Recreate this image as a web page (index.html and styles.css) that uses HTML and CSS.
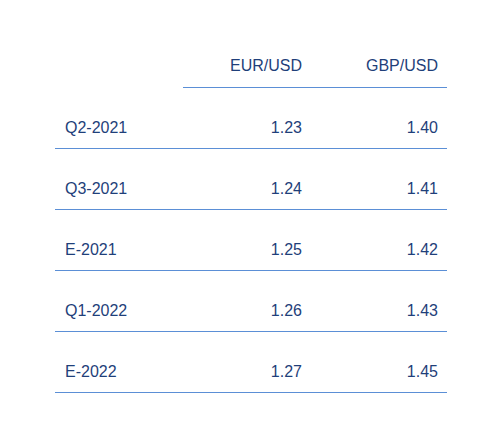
FILE: index.html
```html
<!DOCTYPE html>
<html>
<head>
<meta charset="utf-8">
<link rel="stylesheet" href="styles.css">
</head>
<body>
<div class="wrap">
<table class="rates">
  <colgroup>
    <col class="c1">
    <col class="c2">
    <col class="c3">
  </colgroup>
  <thead>
    <tr>
      <th class="blank"></th>
      <th class="num">EUR/USD</th>
      <th class="num">GBP/USD</th>
    </tr>
  </thead>
  <tbody>
    <tr><td>Q2-2021</td><td class="num">1.23</td><td class="num">1.40</td></tr>
    <tr><td>Q3-2021</td><td class="num">1.24</td><td class="num">1.41</td></tr>
    <tr><td>E-2021</td><td class="num">1.25</td><td class="num">1.42</td></tr>
    <tr><td>Q1-2022</td><td class="num">1.26</td><td class="num">1.43</td></tr>
    <tr><td>E-2022</td><td class="num">1.27</td><td class="num">1.45</td></tr>
  </tbody>
</table>
</div>
</body>
</html>
```
FILE: styles.css
```css
html, body {
  margin: 0;
  padding: 0;
  background: #ffffff;
}
.wrap {
  padding: 57px 0 0 55px;
}
.rates {
  border-collapse: collapse;
  width: 392px;
  font-family: "Liberation Sans", Arial, sans-serif;
  font-size: 16px;
  line-height: 18px;
  color: #1f3f7a;
  table-layout: fixed;
}
.c1, .c2 {
  width: 128px;
}
.c3 {
  width: 136px;
}
.rates th,
.rates td {
  box-sizing: border-box;
}
.rates th {
  font-weight: normal;
  padding: 0 9px 12px 10px;
  border-bottom: 1px solid #5b8fd6;
}
.rates th.blank {
  border-bottom: none;
}
.rates td {
  padding: 31px 9px 11px 10px;
  border-bottom: 1px solid #5b8fd6;
  text-align: left;
}
.rates .num {
  text-align: right;
}
```
